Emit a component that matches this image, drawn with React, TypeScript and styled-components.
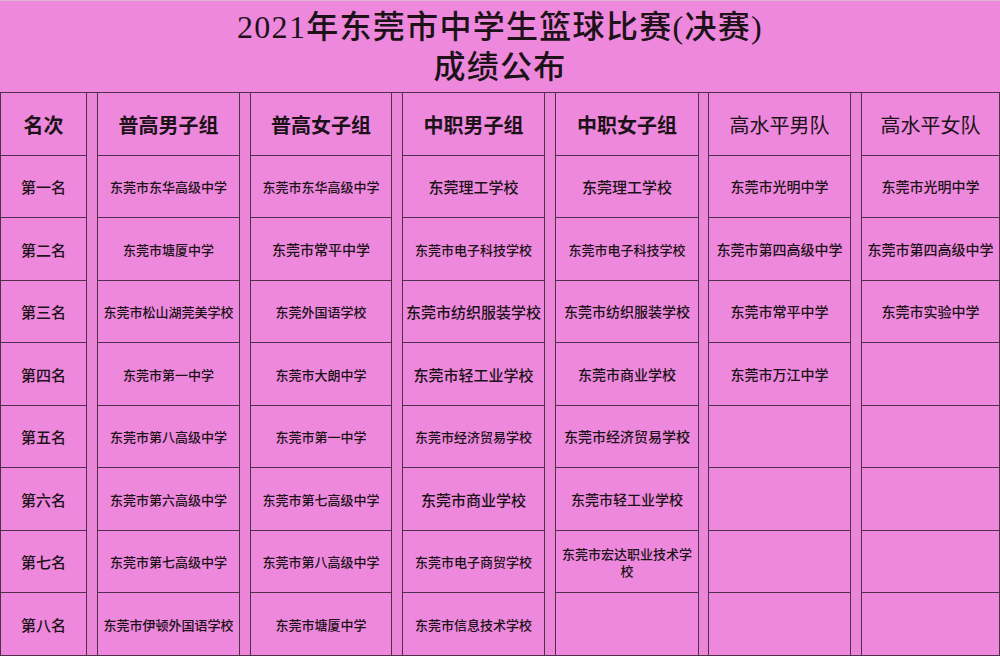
import React from "react";
import styled, { createGlobalStyle } from "styled-components";

const Global = createGlobalStyle`
  html, body { margin: 0; padding: 0; background: #ee88dd; }
  * { box-sizing: border-box; }
`;

const LINE = "#4e2f4c";
const PINK = "#ee88dd";

const Sheet = styled.div`
  width: 1000px;
  height: 656px;
  display: grid;
  grid-template-columns: 87px 11px 142px 11px 141px 11px 142px 11px 143px 10px 142px 11px 138px;
  grid-template-rows: 93px 63px 62px 63px 62px 63px 62px 63px 62px 63px;
  background: ${PINK};
  font-family: "Noto Sans CJK SC", "Noto Sans", sans-serif;
  color: #1c1218;
  overflow: hidden;
`;

const Title = styled.div`
  grid-column: 1 / -1;
  grid-row: 1;
  border-top: 1px solid #d6b8d0;
  border-bottom: 1px solid ${LINE};
  display: flex;
  flex-direction: column;
  align-items: center;
  justify-content: center;
  font-family: "Liberation Serif", "Noto Sans CJK SC", serif;
  font-size: 32px;
  font-weight: 500;
  letter-spacing: 1.3px;
  line-height: 40px;
  padding-top: 1px;
`;

const Cell = styled.div<{ $first?: boolean; $size?: number; $weight?: number }>`
  border-right: 1px solid ${LINE};
  border-bottom: 1px solid ${LINE};
  border-left: ${(p) => (p.$first ? `1px solid ${LINE}` : "none")};
  display: flex;
  align-items: center;
  justify-content: center;
  text-align: center;
  padding: 0 2px;
  font-size: ${(p) => p.$size ?? 13}px;
  font-weight: ${(p) => p.$weight ?? 500};
  line-height: 17px;
  word-break: break-all;
`;

const Spacer = styled.div<{ $col: number }>`
  grid-column: ${(p) => p.$col};
  grid-row: 2 / span 9;
  border-right: 1px solid ${LINE};
  border-bottom: 1px solid ${LINE};
  background: #ea85d8;
`;

type Entry = [string, number] | null;

const headers: { label: string; weight: number }[] = [
  { label: "普高男子组", weight: 700 },
  { label: "普高女子组", weight: 700 },
  { label: "中职男子组", weight: 700 },
  { label: "中职女子组", weight: 700 },
  { label: "高水平男队", weight: 400 },
  { label: "高水平女队", weight: 400 },
];

const ranks = ["第一名", "第二名", "第三名", "第四名", "第五名", "第六名", "第七名", "第八名"];

const rows: Entry[][] = [
  [["东莞市东华高级中学", 13], ["东莞市东华高级中学", 13], ["东莞理工学校", 15], ["东莞理工学校", 15], ["东莞市光明中学", 14], ["东莞市光明中学", 14]],
  [["东莞市塘厦中学", 13], ["东莞市常平中学", 14], ["东莞市电子科技学校", 13], ["东莞市电子科技学校", 13], ["东莞市第四高级中学", 14], ["东莞市第四高级中学", 14]],
  [["东莞市松山湖莞美学校", 13], ["东莞外国语学校", 13], ["东莞市纺织服装学校", 15], ["东莞市纺织服装学校", 14], ["东莞市常平中学", 14], ["东莞市实验中学", 14]],
  [["东莞市第一中学", 13], ["东莞市大朗中学", 13], ["东莞市轻工业学校", 15], ["东莞市商业学校", 14], ["东莞市万江中学", 14], null],
  [["东莞市第八高级中学", 13], ["东莞市第一中学", 13], ["东莞市经济贸易学校", 13], ["东莞市经济贸易学校", 14], null, null],
  [["东莞市第六高级中学", 13], ["东莞市第七高级中学", 13], ["东莞市商业学校", 15], ["东莞市轻工业学校", 14], null, null],
  [["东莞市第七高级中学", 13], ["东莞市第八高级中学", 13], ["东莞市电子商贸学校", 13], ["东莞市宏达职业技术学校", 13], null, null],
  [["东莞市伊顿外国语学校", 13], ["东莞市塘厦中学", 13], ["东莞市信息技术学校", 13], null, null, null],
];

export default function App() {
  return (
    <>
      <Global />
      <Sheet>
        <Title>
          <div>2021年东莞市中学生篮球比赛(决赛)</div>
          <div>成绩公布</div>
        </Title>

        {[2, 4, 6, 8, 10, 12].map((c) => (
          <Spacer key={c} $col={c} />
        ))}

        <Cell $first $size={20} $weight={700}>
          名次
        </Cell>
        {headers.map((h) => (
          <Cell key={h.label} $size={20} $weight={h.weight}>
            {h.label}
          </Cell>
        ))}

        {rows.map((row, r) => (
          <React.Fragment key={r}>
            <Cell $first $size={15}>
              {ranks[r]}
            </Cell>
            {row.map((e, i) => (
              <Cell key={i} $size={e ? e[1] : 13}>
                {e ? e[0] : ""}
              </Cell>
            ))}
          </React.Fragment>
        ))}
      </Sheet>
    </>
  );
}
